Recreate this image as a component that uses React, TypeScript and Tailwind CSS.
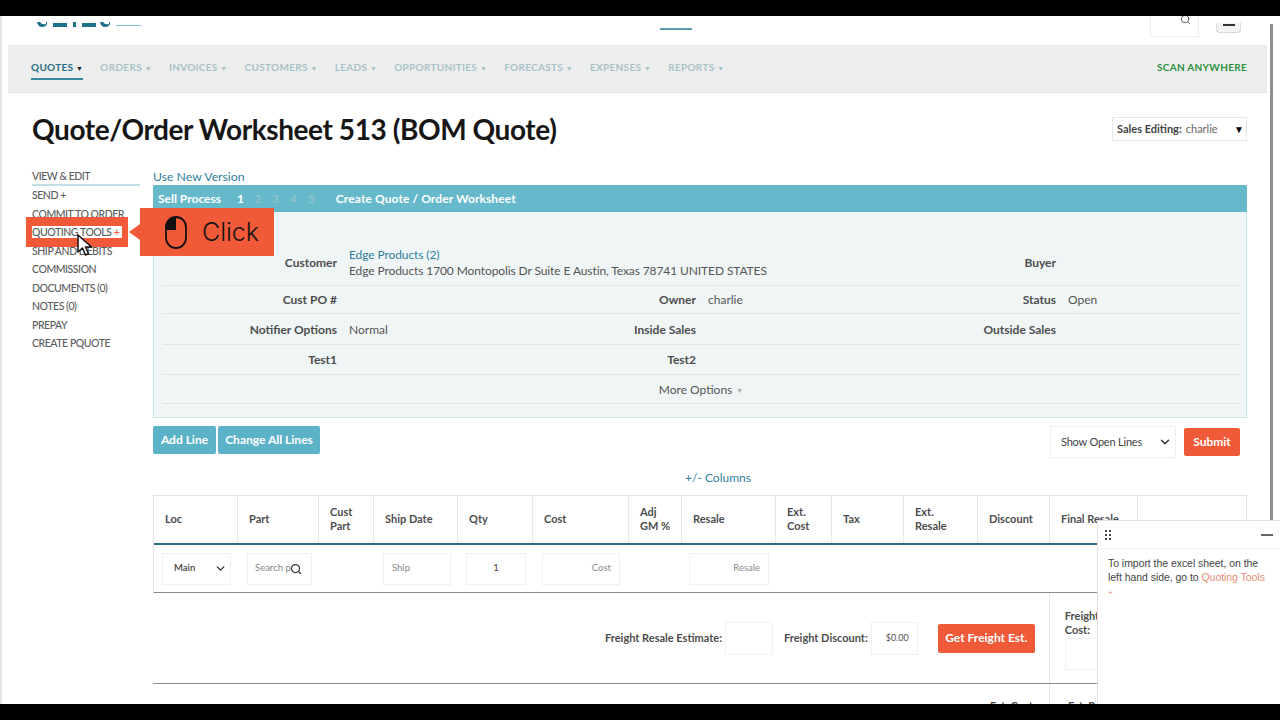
import React from 'react'
import { ChevronDown, Search } from 'lucide-react'

const navItems = ['ORDERS', 'INVOICES', 'CUSTOMERS', 'LEADS', 'OPPORTUNITIES', 'FORECASTS', 'EXPENSES', 'REPORTS']
const sideItems = ['SEND +', 'COMMIT TO ORDER', 'QUOTING TOOLS', 'SHIP AND DEBITS', 'COMMISSION', 'DOCUMENTS (0)', 'NOTES (0)', 'PREPAY', 'CREATE PQUOTE']

const columns = [
  { label: ['Loc'], w: 'w-[84px]' },
  { label: ['Part'], w: 'w-[81px]' },
  { label: ['Cust', 'Part'], w: 'w-[55px]' },
  { label: ['Ship Date'], w: 'w-[84px]' },
  { label: ['Qty'], w: 'w-[75px]' },
  { label: ['Cost'], w: 'w-[96px]' },
  { label: ['Adj', 'GM %'], w: 'w-[53px]' },
  { label: ['Resale'], w: 'w-[94px]' },
  { label: ['Ext.', 'Cost'], w: 'w-[56px]' },
  { label: ['Tax'], w: 'w-[72px]' },
  { label: ['Ext.', 'Resale'], w: 'w-[74px]' },
  { label: ['Discount'], w: 'w-[72px]' },
  { label: ['Final Resale'], w: 'w-[88px]' },
  { label: [''], w: 'flex-1' },
]

function FormRow({ children }: { children: React.ReactNode }) {
  return <div className="flex items-center ml-[8px] mr-[6px] border-b border-[#dfe5e6]">{children}</div>
}

function Label({ children, w }: { children?: React.ReactNode; w: string }) {
  return <div className={`${w} shrink-0 text-right font-bold text-[12px] text-[#4d4d4d]`}>{children}</div>
}

function CetecLogo() {
  return (
    <svg width="106" height="6" viewBox="0 0 106 6" className="ml-[28px] mt-[6px]">
      <path d="M1 0h3q2 3 6 2V0h1v2q-1 3-5 3T1 0Z" fill="#1f6f8b" />
      <rect x="17" y="1" width="14" height="4" fill="#1f6f8b" />
      <rect x="37" y="0" width="3" height="5" fill="#1f6f8b" />
      <rect x="46" y="1" width="14" height="4" fill="#1f6f8b" />
      <path d="M64 0h3q2 3 6 2V0h1v2q-1 3-5 3T64 0Z" fill="#1f6f8b" />
      <rect x="80" y="3" width="25" height="1" fill="#7fc0cf" />
    </svg>
  )
}

function MouseIcon() {
  return (
    <svg width="22" height="33" viewBox="0 0 22 33" fill="none">
      <rect x="1" y="1" width="20" height="31" rx="10" stroke="#111" strokeWidth="1.800" />
      <path d="M11 1A10 10 0 0 0 1 11v3h10V1Z" fill="#111" />
    </svg>
  )
}

function Cursor() {
  return (
    <svg width="16" height="24" viewBox="0 0 16 24">
      <path d="M1 1v17l4.500-4 3 7 3-1.300-3-6.700h6L1 1Z" fill="#fff" stroke="#111" strokeWidth="1.500" strokeLinejoin="round" />
    </svg>
  )
}

export default function App() {
  return (
    <div className="relative w-[1280px] h-[720px] overflow-hidden bg-white font-['Lato','Noto_Sans',sans-serif] flex flex-col">
      <div className="h-4 bg-black shrink-0" />

      <div className="flex-1 min-h-0 border-l-2 border-[#e4e4e4] pl-[6px] pr-[13px] overflow-hidden">
        {/* top bar, cut off by the video frame */}
        <div className="h-[29px] flex items-start">
          <CetecLogo />
          <div className="ml-[518px] mt-[12px] w-[32px] h-[2px] bg-[#5a9db3]" />
          <div className="ml-auto mr-[26px] flex items-start">
            <div className="w-[49px] h-[21px] border border-t-0 border-[#eeeeee] flex justify-end pr-[7px] overflow-hidden">
              <Search className="w-[11px] h-[11px] -mt-[2px] text-[#555]" />
            </div>
            <div className="ml-[17px] mt-[7px] w-[25px] h-[10px] border border-t-0 border-[#d8d8d8] bg-[#f3f3f3] rounded-b-sm flex justify-center">
              <div className="w-[12px] h-[2px] mt-[1px] bg-[#333]" />
            </div>
          </div>
        </div>

        {/* nav */}
        <div className="h-[48px] bg-[#eceeee] border-b border-[#e4e4e4] flex items-center pl-[23px] pr-[20px] pb-[2px] text-[10px] font-bold tracking-[0.3px]">
          <div className="relative text-[#276d85] mr-[17px] whitespace-nowrap">
            QUOTES <span className="text-[7px] text-[#222]">▼</span>
            <div className="absolute left-0 right-0 -bottom-[5px] h-[2px] bg-[#3a87a1]" />
          </div>
          {navItems.map((item) => (
            <div key={item} className="text-[#a9c2c8] mr-[17px] whitespace-nowrap">
              {item} <span className="text-[7px]">▼</span>
            </div>
          ))}
          <div className="ml-auto text-[#2f8f3e] tracking-[0.3px]">SCAN ANYWHERE</div>
        </div>

        {/* title */}
        <div className="flex items-center justify-between pl-[24px] pr-[20px] pb-[3px] h-[75px]">
          <h1 className="font-bold text-[28px] tracking-[-0.42px] text-[#161616] whitespace-nowrap">Quote/Order Worksheet 513 (BOM Quote)</h1>
          <div className="w-[135px] h-[24px] border border-[#e6e6e6] flex items-center pl-[4px] pr-[2px] text-[11px] text-[#666]">
            <span className="font-bold text-[#444] mr-1">Sales Editing:</span> charlie
            <span className="ml-auto text-[10px] text-black">▼</span>
          </div>
        </div>

        <div className="flex pl-[24px] pr-[20px]">
          {/* side menu */}
          <div className="w-[121px] shrink-0 text-[10.500px] tracking-[-0.45px] text-[#5c5c5c] font-medium">
            <div className="w-[108px] h-[18px] border-b-2 border-[#bfe0e6] leading-[16px]">VIEW &amp; EDIT</div>
            {sideItems.map((item) => (
              <div key={item} className="h-[18.500px] leading-[18.500px] whitespace-nowrap">
                {item}
                {item === 'QUOTING TOOLS' && <span className="text-[#f15a38]"> +</span>}
              </div>
            ))}
          </div>

          {/* worksheet */}
          <div className="flex-1 min-w-0">
            <div className="h-[17px] text-[12.250px] leading-[17px] text-[#2f7f9b]">Use New Version</div>
            <div className="h-[27px] bg-[#65b9ca] flex items-center pl-[5px] font-bold text-[12px] text-white rounded-t-[1px]">
              <span className="mr-[14px] w-[65px] whitespace-nowrap">Sell Process</span>
              <span className="mr-[10px]">1</span>
              <span className="text-[#8fc3cc] mr-[11px]">2</span>
              <span className="text-[#8fc3cc] mr-[11px]">3</span>
              <span className="text-[#8fc3cc] mr-[11px]">4</span>
              <span className="text-[#8fc3cc] mr-[21px]">5</span>
              <span className="tracking-[0.1px]">Create Quote / Order Worksheet</span>
            </div>
            <div className="h-[206px] bg-[#f0f6f6] border border-t-0 border-[#c9e6ea]">
              <div className="h-[28px]" />
              <FormRow>
                <div className="h-[45px] flex items-center w-full">
                  <Label w="w-[175px]">Customer</Label>
                  <div className="ml-[12px] pt-[1px] text-[12px] leading-[16.500px] tracking-[-0.1px] text-[#555]">
                    <div className="text-[#2f7f9b]">Edge Products (2)</div>
                    <div>Edge Products 1700 Montopolis Dr Suite E Austin, Texas 78741 UNITED STATES</div>
                  </div>
                  <Label w="w-[100px] ml-auto mr-[184px]">Buyer</Label>
                </div>
              </FormRow>
              <FormRow>
                <div className="h-[27px] flex items-center w-full">
                  <Label w="w-[175px]">Cust PO #</Label>
                  <Label w="w-[359px]">Owner</Label>
                  <div className="ml-[12px] text-[12px] text-[#555] w-[200px]">charlie</div>
                  <Label w="w-[148px]">Status</Label>
                  <div className="ml-[12px] text-[12px] text-[#555]">Open</div>
                </div>
              </FormRow>
              <FormRow>
                <div className="h-[30px] pt-[1px] flex items-center w-full">
                  <Label w="w-[175px]">Notifier Options</Label>
                  <div className="ml-[12px] text-[12px] text-[#555] w-[160px]">Normal</div>
                  <Label w="w-[187px]">Inside Sales</Label>
                  <Label w="w-[348px] ml-[12px]">Outside Sales</Label>
                </div>
              </FormRow>
              <FormRow>
                <div className="h-[29px] flex items-center w-full">
                  <Label w="w-[175px]">Test1</Label>
                  <Label w="w-[359px]">Test2</Label>
                </div>
              </FormRow>
              <FormRow>
                <div className="h-[28px] pt-[2px] flex items-center justify-center w-full text-[12px] text-[#555]">
                  More Options <span className="text-[7px] text-[#aaa] ml-1">▼</span>
                </div>
              </FormRow>
            </div>

            {/* actions */}
            <div className="flex items-start justify-between mt-[8px] pr-[7px] h-[32px]">
              <div className="flex gap-[2px]">
                <button className="h-[28px] w-[63px] rounded-[2px] bg-[#5cb2c6] text-white font-bold text-[12px]">Add Line</button>
                <button className="h-[28px] w-[102px] rounded-[2px] bg-[#5cb2c6] text-white font-bold text-[12px]">Change All Lines</button>
              </div>
              <div className="flex items-center gap-[8px]">
                <div className="w-[126px] h-[32px] border border-[#efefef] flex items-center justify-between pl-[10px] pr-[3px] text-[11px] tracking-[-0.2px] text-[#444]">
                  Show Open Lines <ChevronDown className="w-[14px] h-[14px] text-[#333]" strokeWidth={2.500} />
                </div>
                <button className="w-[56px] h-[28px] rounded-[2px] bg-[#f15a38] text-white font-bold text-[12px]">Submit</button>
              </div>
            </div>

            <div className="h-[37px] flex items-center justify-center text-[12px] text-[#2f7f9b] pt-[3px] pl-[36px]">+/- Columns</div>

            {/* table */}
            <div className="border-x border-t border-[#e4e4e4]">
              <div className="flex h-[47px] border-b-[2px] border-[#2d6f88] box-content -mb-[2px]">
                {columns.map((col, i) => (
                  <div key={i} className={`${col.w} shrink-0 border-r last:border-r-0 last:flex-1 border-[#e8e8e8] flex flex-col justify-center pl-[11px] pb-[2px] font-bold text-[11px] leading-[14px] text-[#4d4d4d]`}>
                    {col.label.map((l) => <div key={l} className="whitespace-nowrap">{l}</div>)}
                  </div>
                ))}
              </div>
            </div>
            <div className="h-[48px] mt-[2px] border-l border-[#e4e4e4] border-b-[1.500px] border-b-[#8a8a8a] flex items-center text-[9.500px] text-[#888]">
              <div className="ml-[8px] w-[69px] h-[32px] border border-[#f0f0f0] flex items-center justify-between pl-[11px] pr-[3px] text-[#444] font-semibold">
                Main <ChevronDown className="w-[13px] h-[13px] text-[#333]" strokeWidth={2.500} />
              </div>
              <div className="ml-[16px] w-[65px] h-[32px] border border-[#f0f0f0] flex items-center pl-[7px] overflow-hidden whitespace-nowrap relative">
                Search p
                <Search className="absolute right-[9px] w-[12px] h-[12px] text-[#333]" strokeWidth={2.500} />
              </div>
              <div className="ml-[71px] w-[68px] h-[32px] border border-[#f0f0f0] flex items-center pl-[8px]">Ship</div>
              <div className="ml-[15px] w-[60px] h-[32px] border border-[#f0f0f0] flex items-center justify-center text-[#444]">1</div>
              <div className="ml-[16px] w-[78px] h-[32px] border border-[#f0f0f0] flex items-center justify-end pr-[8px]">Cost</div>
              <div className="ml-[69px] w-[80px] h-[32px] border border-[#f0f0f0] flex items-center justify-end pr-[8px]">Resale</div>
            </div>

            {/* freight */}
            <div className="h-[91px] border-b-[1.500px] border-[#8a8a8a] flex items-center text-[11px] font-bold text-[#4d4d4d]">
              <div className="ml-[452px] whitespace-nowrap">Freight Resale Estimate:</div>
              <div className="ml-[3px] w-[48px] h-[33px] border border-[#f0f0f0]" />
              <div className="ml-[11px] whitespace-nowrap">Freight Discount:</div>
              <div className="ml-[3px] w-[47px] h-[33px] border border-[#f0f0f0] flex items-center justify-end pr-[8px] text-[9px] font-normal text-[#555]">$0.00</div>
              <button className="ml-[20px] w-[97px] h-[29px] rounded-[2px] bg-[#f15a38] text-white text-[12px]">Get Freight Est.</button>
              <div className="ml-[14px] self-stretch border-l border-[#e8e8e8] pl-[15px] pt-[16px] leading-[14px]">
                Freight<br />Cost:
                <div className="mt-[1px] w-[48px] h-[32px] border border-[#f0f0f0]" />
              </div>
            </div>
            <div className="h-[20px] flex text-[11px] font-bold text-[#4d4d4d]">
              <div className="ml-[837px] pt-[14px]">Est. Cost</div>
              <div className="ml-[16px] border-l border-[#e8e8e8] pl-[18px] pt-[14px]">Est. Resale</div>
            </div>
          </div>
        </div>
      </div>

      <div className="h-4 bg-black shrink-0 relative z-20" />

      {/* page scrollbar edge */}
      <div className="absolute left-[1270px] top-[24px] bottom-[16px] w-[3px] bg-[#8d8d8d]" />

      {/* callout over the menu */}
      <div className="absolute left-[26px] top-[217px] w-[102px] h-[30px] border-x-[6px] border-y-[9px] border-[#f15a38] z-10 pointer-events-none" />
      <div className="absolute left-[129px] top-[224px] w-0 h-0 border-y-[8px] border-y-transparent border-r-[11px] border-r-[#f15a38] z-10" />
      <div className="absolute left-[140px] top-[208px] w-[134px] h-[48px] bg-[#f15a38] flex items-center pl-[25px] gap-[15px] z-10">
        <MouseIcon />
        <span className="pt-[2px] text-[25px] text-[#151515] font-['Inter',sans-serif] font-light">Click</span>
      </div>
      <div className="absolute left-[77px] top-[234px] z-10">
        <Cursor />
      </div>

      {/* help popup */}
      <div className="absolute left-[1097px] top-[520px] w-[183px] h-[184px] bg-white border-t border-l border-[#e0e0e0] z-10">
        <div className="h-[28px] border-b border-[#f2f2f2] flex items-center justify-between pl-[7px] pr-[7px]">
          <div className="grid grid-cols-2 gap-x-[2px] gap-y-[2px]">
            {[0, 1, 2, 3, 4, 5].map((i) => <div key={i} className="w-[2px] h-[2px] bg-[#444]" />)}
          </div>
          <div className="w-[12px] h-[2px] bg-[#666]" />
        </div>
        <div className="pt-[7px] pl-[10px] text-[10.500px] tracking-[-0.05px] leading-[14px] text-[#444] font-['Liberation_Sans',sans-serif] whitespace-nowrap">
          To import the excel sheet, on the<br />
          left hand side, go to <span className="text-[#e98a76]">Quoting Tools</span><br />
          <span className="text-[8px] text-[#e98a76]">+</span>
        </div>
      </div>
    </div>
  )
}
